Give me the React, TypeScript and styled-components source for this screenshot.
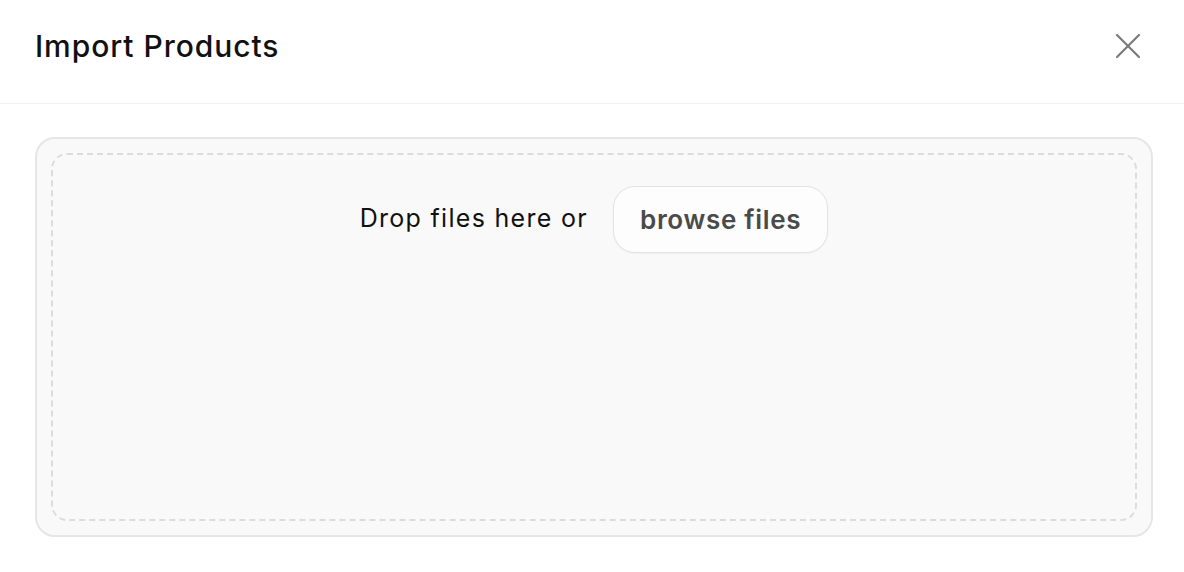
import React from 'react';
import styled, { createGlobalStyle } from 'styled-components';

const GlobalStyle = createGlobalStyle`
  html, body {
    margin: 0;
    padding: 0;
    background: #ffffff;
    font-family: Inter, "Noto Sans", "Liberation Sans", sans-serif;
    -webkit-font-smoothing: antialiased;
  }
`;

const Modal = styled.div`
  width: 1184px;
  height: 572px;
  display: flex;
  flex-direction: column;
  background: #fff;
`;

const Header = styled.header`
  height: 104px;
  box-sizing: border-box;
  display: flex;
  align-items: center;
  justify-content: space-between;
  padding: 0 43px 12px 35px;
  border-bottom: 1px solid #efefef;
`;

const Title = styled.h1`
  margin: 0;
  font-size: 30px;
  font-weight: 500;
  letter-spacing: 0.95px;
  color: #111;
`;

const CloseButton = styled.button`
  display: flex;
  align-items: center;
  justify-content: center;
  padding: 0;
  border: 0;
  background: none;
  color: #7a7a7a;
  cursor: pointer;
`;

const Body = styled.main`
  flex: 1;
  display: flex;
  padding: 33px 31px 35px 35px;
`;

const DropArea = styled.div`
  flex: 1;
  display: flex;
  padding: 14px;
  border: 2px solid #e6e6e6;
  border-radius: 20px;
  background: #f9f9f9;
`;

const DashedZone = styled.div`
  flex: 1;
  display: flex;
  justify-content: center;
  align-items: flex-start;
  padding-top: 31px;
  border: 2px dashed #dcdcdc;
  border-radius: 16px;
`;

const Prompt = styled.div`
  display: flex;
  align-items: center;
  gap: 25px;
`;

const PromptText = styled.span`
  font-size: 25px;
  letter-spacing: 1.3px;
  color: #111;
  margin-top: -4px;
`;

const BrowseButton = styled.button`
  height: 67px;
  padding: 0 26px;
  border: 1.5px solid #e3e3e3;
  border-radius: 22px;
  background: #fdfdfd;
  font-family: inherit;
  font-size: 26px;
  font-weight: 600;
  letter-spacing: 0.7px;
  color: #4a4a4a;
  box-shadow: 0 1px 2px rgba(0, 0, 0, 0.04);
  cursor: pointer;
`;

export default function App() {
  return (
    <>
      <GlobalStyle />
      <Modal>
        <Header>
          <Title>Import Products</Title>
          <CloseButton aria-label="Close">
            <svg width="26" height="26" viewBox="0 0 26 26" fill="none" stroke="currentColor" strokeWidth="2.2" strokeLinecap="round">
              <line x1="2" y1="2" x2="24" y2="24" />
              <line x1="24" y1="2" x2="2" y2="24" />
            </svg>
          </CloseButton>
        </Header>
        <Body>
          <DropArea>
            <DashedZone>
              <Prompt>
                <PromptText>Drop files here or</PromptText>
                <BrowseButton>browse files</BrowseButton>
              </Prompt>
            </DashedZone>
          </DropArea>
        </Body>
      </Modal>
    </>
  );
}
